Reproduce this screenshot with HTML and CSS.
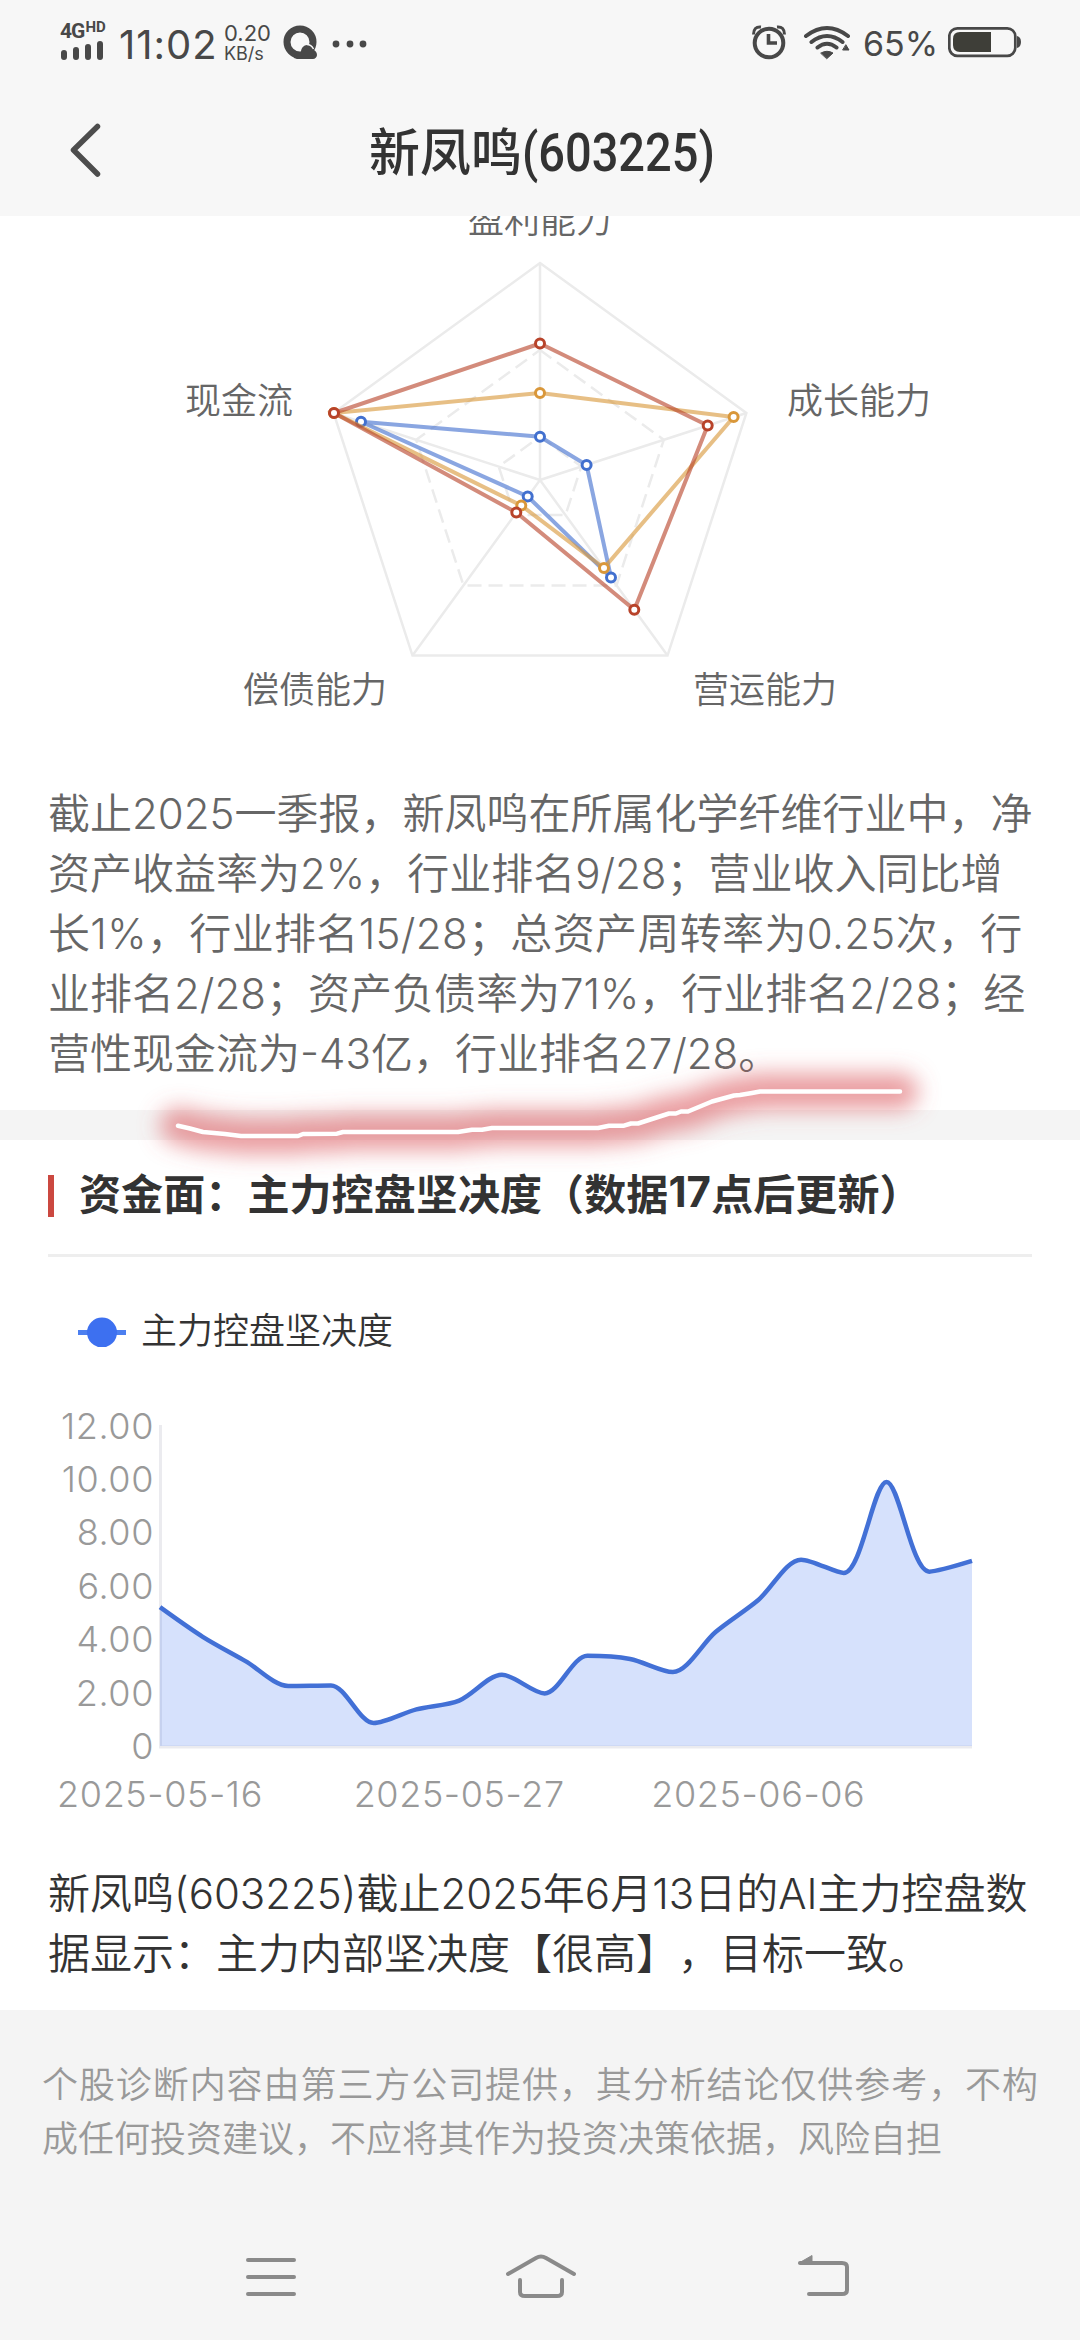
FILE: index.html
```html
<!DOCTYPE html>
<html lang="zh-CN">
<head>
    <meta charset="UTF-8">
    <meta name="viewport" content="width=device-width, initial-scale=1.0">
    <title>新凤鸣(603225)</title>
    <link rel="stylesheet" href="styles.css">
</head>
<body>
    <div class="page">
        <div class="status-bar">
            <div class="signal">
                <div class="network">4G<span class="hd">HD</span></div>
                <svg width="44" height="20" viewBox="0 0 44 20" stroke="#484848" stroke-width="6" stroke-linecap="round">
                    <path d="M4 12v4M16 9v7M28 6v10M40 3v13"/>
                </svg>
            </div>
            <div class="time">11:02</div>
            <div class="speed"><span>0.20</span><span class="unit">KB/s</span></div>
            <svg class="browser-icon" width="34" height="34" viewBox="0 0 34 34">
                <circle cx="17" cy="17" r="13" fill="none" stroke="#484848" stroke-width="7"/>
                <path d="M11 33c0-5 4-6 7-6 0-4 3-7 6-7s5 2 6 5c2 0 4 2 4 5 0 2-2 4-4 4H14z" fill="#484848"/>
                <path d="M24 19.500c3 0 5 1.500 6.500 4.500" fill="none" stroke="#f7f7f7" stroke-width="1.500"/>
            </svg>
            <svg class="more-icon" width="36" height="8" viewBox="0 0 36 8" fill="#484848">
                <circle cx="4" cy="4" r="3.4"/><circle cx="18" cy="4" r="3.4"/><circle cx="31" cy="4" r="3.4"/>
            </svg>
            <div class="status-right">
                <svg width="36" height="36" viewBox="0 0 36 36" fill="none" stroke="#484848">
                    <circle cx="18" cy="19" r="14.3" stroke-width="4"/>
                    <path d="M17.500 10v9H26" stroke-width="3.600"/>
                    <path d="M2.500 10.500C2.500 5 5 2.500 10 3" stroke-width="3"/>
                    <path d="M33.500 10.500C33.500 5 31 2.500 26 3" stroke-width="3"/>
                </svg>
                <svg class="wifi" width="48" height="36" viewBox="0 0 48 36" fill="none" stroke="#484848" stroke-width="4" stroke-linecap="round">
                    <path d="M3 12Q24-4 45 12M8.500 18Q24 6 39.500 18M14.500 23.500Q24 16 33.500 23.500"/>
                    <path d="M18 29Q24 25.500 30 29L24 34.500z" fill="#484848" stroke-width="1"/>
                    <path d="M43 21l3 5h-6z" fill="#484848" stroke-width="1"/>
                </svg>
                <span class="percent">65%</span>
                <svg width="74" height="32" viewBox="0 0 74 32">
                    <rect x="1.300" y="2.300" width="66" height="27.500" rx="8" fill="none" stroke="#484848" stroke-width="2.700"/>
                    <path d="M12 6h31v20H12q-7 0-7-7v-6q0-7 7-7z" fill="#3e3e38"/>
                    <path d="M69 10q4 1 4 6t-4 6z" fill="#484848"/>
                </svg>
            </div>
        </div>

        <div class="title-bar">
            <svg class="back" width="34" height="60" viewBox="0 0 34 60">
                <path d="M28.500 6.500L4.500 30l24 24" fill="none" stroke="#4d4d4d" stroke-width="5.500" stroke-linecap="round" stroke-linejoin="round"/>
            </svg>
            <h1>新凤鸣<span class="code">(603225)</span></h1>
        </div>

        <div class="card finance">
            <svg class="radar" width="1080" height="567" viewBox="0 216 1080 567">
                <g class="grid">
                    <path d="M540 263L746.400 413L667.500 655.600H412.500L333.600 413z"/>
                    <path class="dashed" d="M540 350L663.800 439.800L616.500 585.400H463.500L416.200 439.800z"/>
                    <path class="dashed" d="M540 436.600L581.300 466.600L565.500 515.100H514.500L498.700 466.600z"/>
                    <path d="M540 480V263M540 480L746.400 413M540 480L667.500 655.600M540 480L412.500 655.600M540 480L333.600 413"/>
                </g>
                <g class="series blue">
                    <path d="M540 436.700L586.600 465L611 577.500L527.700 496.500L361 421.700z"/>
                    <circle cx="540" cy="436.700" r="4.500"/><circle cx="586.600" cy="465" r="4.500"/><circle cx="611" cy="577.500" r="4.500"/><circle cx="527.700" cy="496.500" r="4.500"/><circle cx="361" cy="421.700" r="4.500"/>
                </g>
                <g class="series yellow">
                    <path d="M540 393L733.600 417L604 568L521.300 505.500L334 413z"/>
                    <circle cx="540" cy="393" r="4.500"/><circle cx="733.600" cy="417" r="4.500"/><circle cx="604" cy="568" r="4.500"/><circle cx="521.300" cy="505.500" r="4.500"/><circle cx="334" cy="413" r="4.500"/>
                </g>
                <g class="series red">
                    <path d="M540 343.500L707.700 425.500L634.300 609.700L516.300 512.500L334 413z"/>
                    <circle cx="540" cy="343.500" r="4.500"/><circle cx="707.700" cy="425.500" r="4.500"/><circle cx="634.300" cy="609.700" r="4.500"/><circle cx="516.300" cy="512.500" r="4.500"/><circle cx="334" cy="413" r="4.500"/>
                </g>
                <g class="radar-labels">
                    <text x="540" y="233" text-anchor="middle">盈利能力</text>
                    <text x="185" y="414">现金流</text>
                    <text x="787" y="414">成长能力</text>
                    <text x="243" y="703">偿债能力</text>
                    <text x="693" y="703">营运能力</text>
                </g>
            </svg>
            <p class="summary">截止<i>2025</i>一季报，新凤鸣在所属化学纤维行业中，净<br>资产收益率为<i>2%</i>，行业排名<i>9/28</i>；营业收入同比增<br><span class="loose">长<i>1%</i>，行业排名<i>15/28</i>；总资产周转率为<i>0.25</i>次，行</span><br>业排名<i>2/28</i>；资产负债率为<i>71%</i>，行业排名<i>2/28</i>；经<br>营性现金流为<i>-43</i>亿，行业排名<i>27/28</i>。</p>
            <svg class="marker" width="1080" height="160" viewBox="0 1040 1080 160">
                <defs>
                    <filter id="glow" filterUnits="userSpaceOnUse" x="100" y="1020" width="880" height="200">
                        <feGaussianBlur stdDeviation="11"/>
                    </filter>
                    <path id="stroke" d="M178 1125.700L190 1128.500L203 1132L225 1134L241 1136H298L303 1134L337 1133.700L343 1132H458L472 1129.700H482L492 1128H598L609 1125.700H624L631 1123.500H638L669 1113.500H676L681 1111.500H688L712 1101.500L734 1095.500L740 1095L752 1093L760 1091.500H900"/>
                </defs>
                <use href="#stroke" class="marker-glow" filter="url(#glow)"/>
                <use href="#stroke" class="marker-line"/>
            </svg>
        </div>

        <div class="card">
            <h2>资金面：主力控盘坚决度（数据<i>17</i>点后更新）</h2>
            <div class="legend">
                <svg width="48" height="32" viewBox="0 0 48 32">
                    <path d="M0 17.500h48" stroke="#4c7ff0" stroke-width="5"/>
                    <circle cx="24" cy="17.500" r="15" fill="#3d70f0"/>
                </svg>
                <span>主力控盘坚决度</span>
            </div>
            <svg id="chart" width="1080" height="459" viewBox="0 0 1080 459">
                <path class="axis" d="M160.500 20V342M159 342H972"/>
                <path id="area"/>
                <path id="line"/>
                <g id="labels"></g>
            </svg>
            <p class="result">新凤鸣<i>(603225)</i>截止<i>2025</i>年<i>6</i>月<i>13</i>日的<i>AI</i>主力控盘数<br>据显示：主力内部坚决度【很高】，目标一致。</p>
        </div>

        <div class="disclaimer">个股诊断内容由第三方公司提供，其分析结论仅供参考，不构成任何投资建议，不应将其作为投资决策依据，风险自担</div>

        <div class="nav-bar">
            <svg width="54" height="48" viewBox="0 0 54 48" fill="none" stroke="#8a8a8a" stroke-width="4" stroke-linecap="round">
                <path d="M4 7h46M4 24h46M4 41h46"/>
            </svg>
            <svg class="home" width="74" height="48" viewBox="0 0 74 48" fill="none" stroke="#8a8a8a" stroke-width="4" stroke-linecap="round">
                <path d="M4 21L32 5q5-3 10 0l28 16M16 27v12q0 4 5 4h32q5 0 5-4V27"/>
            </svg>
            <svg width="54" height="48" viewBox="0 0 54 48" fill="none" stroke="#8a8a8a" stroke-width="4" stroke-linecap="round">
                <path d="M3 10h42q5 0 5 4v23q0 4-5 4H12"/>
                <path d="M2 10L15 2.500V10z" fill="#8a8a8a" stroke-width="1"/>
            </svg>
        </div>
    </div>
    <script src="chart.js"></script>
</body>
</html>
```
FILE: styles.css
```css
* {
    box-sizing: border-box;
}
body {
    margin: 0;
    background: #fff;
    font-family: Inter, "Noto Sans CJK SC", sans-serif;
    font-weight: 350;
    text-spacing-trim: space-all;
    color: #333;
}
svg {
    display: block;
}
i {
    font-style: normal;
    font-weight: inherit;
}
.page {
    width: 1080px;
    height: 2340px;
    overflow: hidden;
    display: flex;
    flex-direction: column;
}

/* status bar */
.status-bar {
    height: 84px;
    background: #f7f7f7;
    display: flex;
    align-items: center;
    padding: 0 58px 0 60px;
    color: #484848;
}
.signal {
    width: 50px;
    height: 42px;
}
.network {
    font: bold 21px/20px Roboto, sans-serif;
    letter-spacing: -1px;
    display: flex;
    height: 20px;
}
.hd {
    font-size: 15px;
    line-height: 13px;
    letter-spacing: 0;
    margin-left: 1px;
}
.time {
    font-size: 40px;
    font-weight: 400;
    letter-spacing: 1px;
    margin: 5px 0 0 9px;
    width: 105px;
}
.speed {
    display: flex;
    flex-direction: column;
    font-size: 22px;
    font-weight: 400;
    line-height: 22px;
    width: 59px;
}
.unit {
    font-size: 18px;
    line-height: 19px;
}
.browser-icon {
    flex: none;
}
.more-icon {
    margin: 3px 0 0 15px;
}
.status-right {
    margin-left: auto;
    display: flex;
    align-items: center;
}
.wifi {
    margin-left: 16px;
}
.percent {
    font-size: 34px;
    font-weight: 400;
    width: 84px;
    padding: 3px 0 0 12px;
    margin-right: 13px;
    white-space: nowrap;
}

/* title */
.title-bar {
    height: 132px;
    background: #f7f7f7;
    display: flex;
    align-items: center;
    padding-left: 69px;
}
h1 {
    margin: 6px 0 0 266px;
    font-size: 51px;
    font-weight: 500;
    line-height: 60px;
    display: flex;
}
.code {
    font-family: Roboto, sans-serif;
    font-weight: 500;
    font-size: 54px;
    transform: scaleX(0.87);
    transform-origin: left;
}

.card {
    position: relative;
}
.finance {
    border-bottom: 30px solid #f4f4f4;
}
.grid {
    fill: none;
    stroke: #ebebeb;
    stroke-width: 2.5;
}
.dashed {
    stroke-dasharray: 14 7;
}
.series {
    color: #4270cf;
}
.series.yellow {
    color: #d9973a;
}
.series.red {
    color: #b8432a;
}
.series path {
    fill: none;
    stroke: currentColor;
    stroke-width: 4;
    opacity: 0.62;
}
.series circle {
    fill: #fff;
    stroke: currentColor;
    stroke-width: 3;
}
.radar-labels {
    font-size: 36px;
    fill: #666;
}
.summary,
.result {
    margin: 0;
    padding: 0 48px;
    font-size: 42px;
    line-height: 60px;
    white-space: nowrap;
}
.summary {
    color: #666;
    padding-top: 1px;
    padding-bottom: 26px;
}
.loose {
    letter-spacing: 0.35px;
}
.result {
    padding-bottom: 26px;
}

/* highlighter stroke over the last line */
.marker {
    position: absolute;
    left: 0;
    top: 824px;
    z-index: 1;
}
.marker-glow {
    fill: none;
    stroke: #dc5a60;
    stroke-opacity: 0.6;
    stroke-width: 36;
    stroke-linecap: round;
    stroke-linejoin: round;
}
.marker-line {
    fill: none;
    stroke: #fff;
    stroke-width: 4.5;
    stroke-linecap: round;
    stroke-linejoin: round;
}

h2 {
    display: flex;
    align-items: center;
    height: 117px;
    margin: 0 48px;
    padding-bottom: 11px;
    border-bottom: 3px solid #eee;
    font-size: 42px;
    font-weight: 700;
    letter-spacing: 0.1px;
    white-space: nowrap;
}
h2::before {
    content: "";
    width: 6px;
    height: 42px;
    margin: 8px 25px 0 0;
    background: #cb4840;
}
.legend {
    height: 148px;
    padding-left: 78px;
    display: flex;
    align-items: center;
    gap: 15px;
    font-size: 36px;
}
.legend span {
    margin-top: -6px;
}
.axis {
    fill: none;
    stroke: #ebebef;
    stroke-width: 3;
}
#area {
    fill: #3d70f0;
    fill-opacity: 0.21;
}
#line {
    fill: none;
    stroke: #4270d6;
    stroke-width: 4.5;
    stroke-linejoin: round;
}
#labels {
    font-size: 36px;
    font-weight: 300;
    letter-spacing: 0.6px;
    fill: #999;
}

.disclaimer {
    height: 200px;
    background: #f4f4f4;
    color: #999;
    font-size: 36px;
    line-height: 54px;
    padding: 48px 42px 0;
    text-align: justify;
}
.nav-bar {
    flex: 1;
    background: #f5f5f5;
    display: flex;
    padding: 43px 0 0 244px;
}
.home {
    margin: 0 219px 0 206px;
}
```
FILE: chart.js
```js
const values = [5.2, 4.09, 3.18, 2.25, 2.27, 0.86, 1.37, 1.7, 2.67, 1.97, 3.38, 3.26, 2.77, 4.27, 5.47, 6.98, 6.48, 9.89, 6.53, 6.93];
const left = 160, right = 972, bottom = 341, unit = 26.7;
const smooth = 0.3;

const points = values.map((v, i) => [
    left + (right - left) * i / (values.length - 1),
    bottom - v * unit
]);

function clamp(p, a, b) {
    return [0, 1].map(k => Math.max(Math.min(p[k], Math.max(a[k], b[k])), Math.min(a[k], b[k])));
}

// smooth curve, control points never go past the neighbouring values
function smoothPath(pts) {
    let d = `M${pts[0]}`;
    let cp0 = pts[0];
    for (let i = 1; i < pts.length; i++) {
        const prev = pts[i - 1], p = pts[i], next = pts[i + 1];
        let cp1 = p, nextCp = p;
        if (next) {
            const a = Math.hypot(p[0] - prev[0], p[1] - prev[1]);
            const b = Math.hypot(next[0] - p[0], next[1] - p[1]);
            const r = b / (a + b);
            nextCp = clamp([0, 1].map(k => p[k] + (next[k] - prev[k]) * smooth * r), p, next);
            cp1 = clamp([0, 1].map(k => p[k] - (nextCp[k] - p[k]) * a / b), prev, p);
            nextCp = [0, 1].map(k => p[k] + (p[k] - cp1[k]) * b / a);
        }
        d += `C${cp0} ${cp1} ${p}`;
        cp0 = nextCp;
    }
    return d;
}

const path = smoothPath(points);
document.getElementById("line").setAttribute("d", path);
document.getElementById("area").setAttribute("d", `${path}V${bottom}H${left}z`);

let labels = "";
["0", "2.00", "4.00", "6.00", "8.00", "10.00", "12.00"].forEach((t, i) => {
    labels += `<text x="154" y="${354 - i * 53.4}" text-anchor="end">${t}</text>`;
});
[["2025-05-16", 0], ["2025-05-27", 7], ["2025-06-06", 14]].forEach(([t, i]) => {
    labels += `<text x="${points[i][0]}" y="402" text-anchor="middle">${t}</text>`;
});
document.getElementById("labels").innerHTML = labels;
```
